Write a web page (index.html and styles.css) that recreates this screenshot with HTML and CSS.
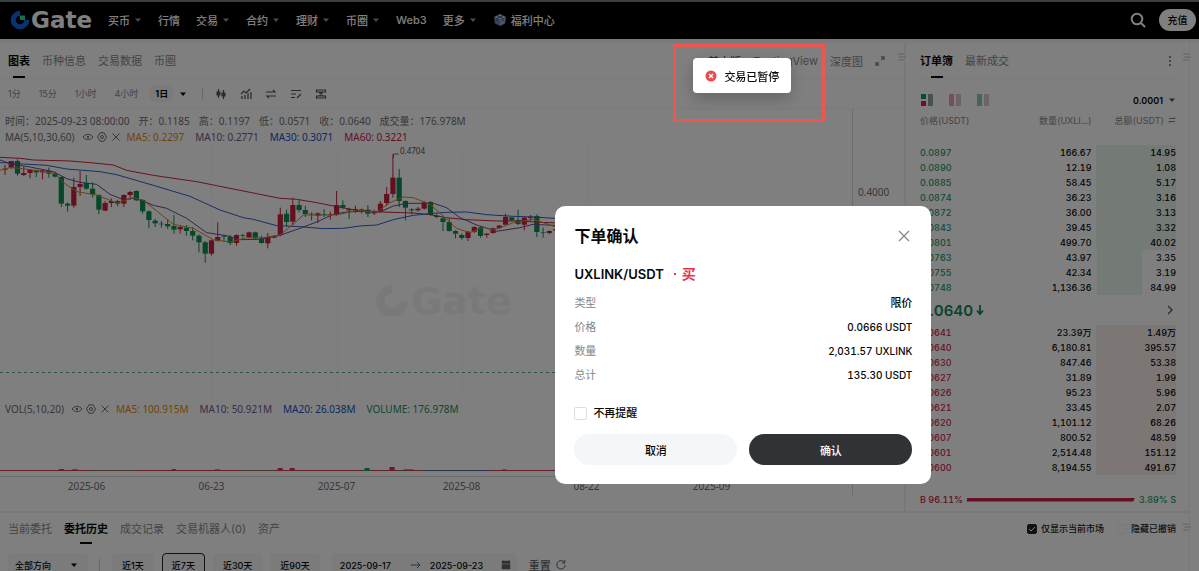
FILE: index.html
```html
<!DOCTYPE html>
<html lang="zh-CN">
<head>
    <meta charset="UTF-8">
    <meta name="viewport" content="width=device-width, initial-scale=1.0">
    <title>UXLINK/USDT - Gate</title>
    <link rel="stylesheet" href="styles.css">
</head>
<body>

    <svg class="sprite" aria-hidden="true">
        <symbol id="caret" viewBox="0 0 8 8"><path d="M1 2.500h6L4 6z" fill="currentColor"/></symbol>
        <symbol id="eye" viewBox="0 0 12 12"><path d="M1 6c2.500-3.500 7.500-3.500 10 0-2.500 3.500-7.500 3.500-10 0z" fill="none" stroke="currentColor"/><circle cx="6" cy="6" r="1.200" fill="currentColor"/></symbol>
        <symbol id="gear" viewBox="0 0 12 12"><path d="M4 1.800h4L10.500 6 8 10.200H4L1.500 6z" fill="none" stroke="currentColor" stroke-linejoin="round"/><circle cx="6" cy="6" r="1.500" fill="none" stroke="currentColor"/></symbol>
        <symbol id="cross" viewBox="0 0 12 12"><path d="M2.500 2.500l7 7M9.500 2.500l-7 7" stroke="currentColor" fill="none"/></symbol>
        <symbol id="grip" viewBox="0 0 8 8"><path d="M0 1h7M1 4h7M0 7h6" stroke="currentColor"/></symbol>
        <symbol id="gate" viewBox="0 0 20 20"><path d="M10 3.200a6.800 6.800 0 1 0 6.800 6.800" fill="none" stroke="currentColor" stroke-width="5"/></symbol>
    </svg>

    <header class="topbar">
        <a class="logo" href="#">
            <svg width="20" height="20" viewBox="0 0 20 20">
                <path d="M10 3.200a6.800 6.800 0 1 0 6.800 6.800" fill="none" stroke="#1565e0" stroke-width="5"/>
                <path d="M10 5.500h5V10h-5z" fill="#17e6a1"/>
            </svg>
            <span>Gate</span>
        </a>
        <nav class="menu">
            <a href="#">买币<svg class="caret"><use href="#caret"/></svg></a>
            <a href="#">行情</a>
            <a href="#">交易<svg class="caret"><use href="#caret"/></svg></a>
            <a href="#">合约<svg class="caret"><use href="#caret"/></svg></a>
            <a href="#">理财<svg class="caret"><use href="#caret"/></svg></a>
            <a href="#">币圈<svg class="caret"><use href="#caret"/></svg></a>
            <a href="#">Web3</a>
            <a href="#">更多<svg class="caret"><use href="#caret"/></svg></a>
            <a href="#">
                <svg class="gift" width="14" height="14" viewBox="0 0 14 14">
                    <path d="M1 4l6-3 6 3-6 3z" fill="#b8c8e8"/>
                    <path d="M1 4l6 3v6L2 10.500z" fill="#6f87b8"/>
                    <path d="M13 4L7 7v6l5-2.500z" fill="#94a8d0"/>
                    <path d="M4 2.500l6 3V8M10 2.500L4 5.500V8" fill="none" stroke="#40598c"/>
                </svg>福利中心</a>
        </nav>
        <button class="search" aria-label="搜索">
            <svg width="16" height="16" viewBox="0 0 16 16"><circle cx="7" cy="7" r="5.300" fill="none" stroke="currentColor" stroke-width="2"/><path d="M11 11l4 4" stroke="currentColor" stroke-width="2"/></svg>
        </button>
        <button class="deposit">充值</button>
    </header>

    <main class="workspace">
        <section class="panel chart-panel">
            <svg class="grip"><use href="#grip"/></svg>
            <div class="tabs">
                <a class="active" href="#">图表</a>
                <a href="#">币种信息</a>
                <a href="#">交易数据</a>
                <a href="#">币圈</a>
                <div class="views">
                    <a class="dark" href="#">基本版</a>
                    <a href="#">TradingView</a>
                    <a href="#">深度图</a>
                    <button aria-label="全屏"><svg width="10" height="10" viewBox="0 0 10 10"><path d="M6 1h3v3M9 1L6 4M4 9H1V6M1 9l3-3" fill="none" stroke="currentColor" stroke-width="1.300"/></svg></button>
                </div>
            </div>
            <div class="toolbar">
                <button>1分</button>
                <button>15分</button>
                <button>1小时</button>
                <button>4小时</button>
                <button class="selected">1日</button>
                <svg class="caret"><use href="#caret"/></svg>
                <span class="divider"></span>
                <div class="tools">
                    <svg viewBox="0 0 12 12"><path d="M3.500 1v9M8.500 2v9"/><path d="M1.500 3.500h4v4h-4zM6.500 4.500h4v4h-4z" fill="currentColor" stroke="none"/></svg>
                    <svg viewBox="0 0 12 12"><path d="M1 6l3-3 2 2 4-4M2 8v3M5 7v4M8 5v6M11 4v7"/></svg>
                    <svg viewBox="0 0 12 12"><path d="M1 4h9L8 2M11 8H2l2 2"/></svg>
                    <svg viewBox="0 0 12 12"><path d="M1 2.500h10M1 6h5M1 9.500h4M7 10l4-4"/></svg>
                    <svg viewBox="0 0 12 12"><path d="M1.500 4V2h9v2zM1.500 10V8h9v2zM4 4l4 4M8 4L4 8"/></svg>
                </div>
            </div>
            <div class="chart">
                <div class="plot">
                    <div class="legend ohlc">
                        <span>时间：2025-09-23 08:00:00</span>
                        <span>开：0.1185</span>
                        <span>高：0.1197</span>
                        <span>低：0.0571</span>
                        <span>收：0.0640</span>
                        <span>成交量：176.978M</span>
                    </div>
                    <div class="legend">
                        <span>MA(5,10,30,60)</span>
                        <span class="legend-icons"><svg><use href="#eye"/></svg><svg><use href="#gear"/></svg><svg><use href="#cross"/></svg></span>
                        <span class="orange">MA5: 0.2297</span>
                        <span class="purple">MA10: 0.2771</span>
                        <span class="blue">MA30: 0.3071</span>
                        <span class="crimson">MA60: 0.3221</span>
                    </div>
                    <svg class="price" viewBox="0 4 853 256" preserveAspectRatio="xMinYMin slice">
                        <path class="grid" d="M85.500 0v260M211.500 0v260M337.500 0v260M462.500 0v260M587.500 0v260M0 257.500h853"/>
                        <g class="watermark">
                            <use href="#gate" x="375" y="143" width="34" height="34"/>
                            <text x="411" y="173">Gate</text>
                        </g>
                        <g id="candles"></g>
                        <g id="averages"></g>
                        <path class="peak" d="M393.500 17v-4h5"/>
                        <text class="peak-label" x="400" y="13">0.4704</text>
                        <path class="last" d="M0 231.500h853"/>
                    </svg>
                    <div class="legend">
                        <span>VOL(5,10,20)</span>
                        <span class="legend-icons"><svg><use href="#eye"/></svg><svg><use href="#gear"/></svg><svg><use href="#cross"/></svg></span>
                        <span class="orange">MA5: 100.915M</span>
                        <span class="purple">MA10: 50.921M</span>
                        <span class="blue">MA20: 26.038M</span>
                        <span class="green">VOLUME: 176.978M</span>
                    </div>
                    <svg class="volume" viewBox="0 0 853 60" preserveAspectRatio="xMinYMax slice">
                        <path d="M0 54.500h853" stroke="#c84050"/>
                        <path d="M92 54.500h45M240 54.500h35M363 54.500h9M396 54.500h8" stroke="#8a6a58"/>
                        <path d="M424 54.500h66" stroke="#4a6898"/>
                        <path d="M59 53.500h5M172 53.500h4" stroke="#109a60"/>
                        <path d="M365 52h5v3h-5z" fill="#109a60"/>
                        <path d="M72 53.500h6M215 53.500h5M404 53.500h10M503 53.500h4" stroke="#e89030"/>
                        <path d="M278 52h5v3h-5zM290 52h5v3h-5zM390 51h5v4h-5z" fill="#d8304a"/>
                    </svg>
                    <div class="dates">
                        <span>2025-06</span><span>06-23</span><span>2025-07</span><span>2025-08</span><span>08-22</span><span>2025-09</span>
                    </div>
                </div>
                <div class="scale">0.4000</div>
            </div>
        </section>

        <section class="panel book">
            <svg class="grip"><use href="#grip"/></svg>
            <div class="tabs">
                <a class="active" href="#">订单簿</a>
                <a href="#">最新成交</a>
                <button class="more" aria-label="更多"><svg width="4" height="12" viewBox="0 0 4 12"><path d="M1 1h2v2H1zM1 5h2v2H1zM1 9h2v2H1z" fill="currentColor"/></svg></button>
            </div>
            <div class="book-modes">
                <svg viewBox="0 0 14 14"><path d="M1 1h5v5H1z" fill="#089a60"/><path d="M1 8h5v5H1z" fill="#e01a4a"/><path d="M8 1h5v12H8z" fill="#90a098"/></svg>
                <svg viewBox="0 0 14 14"><path d="M1 1h5v12H1z" fill="#eda0b0"/><path d="M8 1h5v12H8z" fill="#dcc4c6"/></svg>
                <svg viewBox="0 0 14 14"><path d="M1 1h5v12H1z" fill="#88cbb0"/><path d="M8 1h5v12H8z" fill="#dcc8ca"/></svg>
                <button class="precision">0.0001<svg class="caret"><use href="#caret"/></svg></button>
            </div>
            <table class="orders up">
                <thead>
                    <tr><th>价格(USDT)</th><th>数量(UXLI...)</th><th class="total">总额(USDT)<svg width="8" height="8" viewBox="0 0 8 8"><path d="M1 2.500h6L5.500 1M7 5.500H1L2.500 7" fill="none" stroke="currentColor"/></svg></th></tr>
                </thead>
                <tbody>
                    <tr><td>0.0897</td><td>166.67</td><td class="depth">14.95</td></tr>
                    <tr><td>0.0890</td><td>12.19</td><td class="depth">1.08</td></tr>
                    <tr><td>0.0885</td><td>58.45</td><td class="depth">5.17</td></tr>
                    <tr><td>0.0874</td><td>36.23</td><td class="depth">3.16</td></tr>
                    <tr><td>0.0872</td><td>36.00</td><td class="depth">3.13</td></tr>
                    <tr><td>0.0843</td><td>39.45</td><td class="depth">3.32</td></tr>
                    <tr><td>0.0801</td><td>499.70</td><td class="depth">40.02</td></tr>
                    <tr><td>0.0763</td><td>43.97</td><td class="depth part">3.35</td></tr>
                    <tr><td>0.0755</td><td>42.34</td><td class="depth part">3.19</td></tr>
                    <tr><td>0.0748</td><td>1,136.36</td><td class="depth part">84.99</td></tr>
                </tbody>
            </table>
            <div class="last-price">
                <span>0.0640</span>
                <svg width="8" height="12" viewBox="0 0 8 12"><path d="M4 1v9M1 6.500L4 10l3-3.500" fill="none" stroke="currentColor" stroke-width="1.800"/></svg>
                <svg class="go" width="8" height="12" viewBox="0 0 8 12"><path d="M2 2l4 4-4 4" fill="none" stroke="currentColor" stroke-width="1.300"/></svg>
            </div>
            <table class="orders down">
                <tbody>
                    <tr><td>0.0641</td><td>23.39万</td><td class="depth">1.49万</td></tr>
                    <tr><td>0.0640</td><td>6,180.81</td><td class="depth">395.57</td></tr>
                    <tr><td>0.0630</td><td>847.46</td><td class="depth">53.38</td></tr>
                    <tr><td>0.0627</td><td>31.89</td><td class="depth">1.99</td></tr>
                    <tr><td>0.0626</td><td>95.23</td><td class="depth">5.96</td></tr>
                    <tr><td>0.0621</td><td>33.45</td><td class="depth">2.07</td></tr>
                    <tr><td>0.0620</td><td>1,101.12</td><td class="depth">68.26</td></tr>
                    <tr><td>0.0607</td><td>800.52</td><td class="depth">48.59</td></tr>
                    <tr><td>0.0601</td><td>2,514.48</td><td class="depth">151.12</td></tr>
                    <tr><td>0.0600</td><td>8,194.55</td><td class="depth">491.67</td></tr>
                </tbody>
            </table>
            <div class="ratio">
                <span class="buy">B 96.11%</span>
                <span class="ratio-bar"></span>
                <span class="sell">3.89% S</span>
            </div>
        </section>
    </main>

    <section class="panel history">
        <svg class="grip"><use href="#grip"/></svg>
        <div class="tabs">
            <a href="#">当前委托</a>
            <a class="active" href="#">委托历史</a>
            <a href="#">成交记录</a>
            <a href="#">交易机器人(0)</a>
            <a href="#">资产</a>
            <div class="checks">
                <label><input type="checkbox" checked>仅显示当前市场</label>
                <label><input type="checkbox">隐藏已撤销</label>
            </div>
        </div>
        <div class="filters">
            <div class="side">
                <select aria-label="方向"><option>全部方向</option></select>
                <svg class="caret"><use href="#caret"/></svg>
            </div>
            <span class="divider"></span>
            <button>近1天</button>
            <button class="selected">近7天</button>
            <button>近30天</button>
            <button>近90天</button>
            <div class="range">
                <input type="text" value="2025-09-17" aria-label="开始日期">
                <svg width="10" height="10" viewBox="0 0 10 10"><path d="M0 5h9M6 2l3 3-3 3" fill="none" stroke="currentColor"/></svg>
                <input type="text" value="2025-09-23" aria-label="结束日期">
                <svg width="10" height="10" viewBox="0 0 10 10"><path d="M1 1h8v2.500H1zM1 4.500h8V9H1zM2.500 0v2M7.500 0v2" fill="currentColor" stroke="currentColor" stroke-width=".500"/></svg>
            </div>
            <button class="reset">重置<svg width="10" height="10" viewBox="0 0 10 10"><path d="M8.500 2.500A4.200 4.200 0 1 0 9.200 5M8.800 0v3H6" fill="none" stroke="currentColor"/></svg></button>
        </div>
    </section>

    <div class="overlay"></div>

    <div class="modal" role="dialog" aria-labelledby="modal-title">
        <div class="modal-head">
            <h2 id="modal-title">下单确认</h2>
            <button class="close" aria-label="关闭"><svg width="12" height="12" viewBox="0 0 12 12"><path d="M1 1l10 10M11 1L1 11" stroke="currentColor" stroke-width="1.300"/></svg></button>
        </div>
        <div class="pair">UXLINK/USDT <span class="side-buy"><i></i>买</span></div>
        <dl>
            <div><dt>类型</dt><dd>限价</dd></div>
            <div><dt>价格</dt><dd class="num">0.0666 USDT</dd></div>
            <div><dt>数量</dt><dd class="num">2,031.57 UXLINK</dd></div>
            <div><dt>总计</dt><dd class="num">135.30 USDT</dd></div>
        </dl>
        <label class="remind"><input type="checkbox">不再提醒</label>
        <div class="actions">
            <button class="cancel">取消</button>
            <button class="confirm">确认</button>
        </div>
    </div>

    <div class="highlight">
        <div class="toast">
            <svg width="12" height="12" viewBox="0 0 12 12"><circle cx="6" cy="6" r="5.500" fill="#e84c4c"/><path d="M4 4l4 4M8 4L4 8" stroke="#fff" stroke-width="1.300"/></svg>
            交易已暂停
        </div>
    </div>

    <script>
        // side, high, body top, body bottom, low
        const candles = [
            ['r',72,83,86,102],['r',60,60,80,84],['g',55,60,98,104],['r',76,96,102,105],['r',84,86,96,112],['g',86,88,94,108],
            ['r',86,88,94,115],['g',80,90,98,110],['g',92,98,107,110],['g',106,108,188,198],['g',184,188,194,212],['r',110,138,194,200],
            ['r',90,129,138,165],['g',102,126,143,146],['g',124,143,160,170],['g',160,162,206,220],['r',180,186,209,210],['r',172,180,186,198],
            ['g',176,180,188,196],['r',160,162,188,198],['r',150,153,162,176],['g',148,150,178,180],['g',174,177,211,218],['g',208,211,237,262],
            ['g',234,239,247,258],['g',240,248,250,260],['g',234,249,256,264],['g',222,255,266,278],['r',254,258,265,278],['g',252,260,270,284],
            ['g',258,270,284,298],['g',280,284,304,334],['g',300,304,338,365],['r',296,298,338,344],['r',244,288,299,302],['g',282,286,288,302],
            ['g',282,288,306,312],['r',280,282,306,314],['g',278,282,284,290],['r',272,274,288,292],['g',272,274,292,294],['g',284,292,306,308],
            ['r',276,289,307,322],['r',282,286,290,292],['r',200,220,282,286],['g',206,218,243,256],['r',170,192,242,252],['g',178,192,207,214],
            ['g',194,207,219,228],['g',214,218,220,238],['r',214,217,224,246],['g',204,219,221,228],['r',212,220,222,236],['r',150,192,221,224],
            ['g',178,192,200,204],['g',200,204,208,234],['r',194,204,208,216],['g',202,205,212,218],['g',192,206,218,228],['r',206,210,217,222],
            ['r',180,188,210,212],['r',138,159,186,194],['r',40,110,159,170],['g',84,110,180,198],['g',178,180,200,238],['g',202,205,208,220],
            ['r',198,203,208,212],['r',180,184,203,206],['g',180,183,222,224],['g',220,224,228,232],['g',228,232,243,270],['g',232,243,270,272],
            ['g',268,270,278,292],['g',278,282,291,296],['r',270,272,291,300],['r',256,258,272,276],['g',256,259,285,290],['r',276,278,282,290],
            ['r',260,262,276,278],['r',252,254,261,264],['r',218,228,251,252],['g',228,229,238,240],['g',206,237,249,252],['r',226,230,251,268],
            ['r',222,227,231,240],['g',220,225,273,288],['g',260,273,275,290],['r',268,270,276,280],['r',260,264,268,270]
        ];

        const averages = {
            '#c8263f': '0,49 60,52 100,57 210,60 270,65 340,72 380,88 460,103 590,122 650,134 770,158 840,172 890,175 950,185 1010,197 1070,208 1140,213 1240,216 1290,221 1340,230 1400,236 1490,240 1560,240 1620,244 1680,246',
            '#2c5fc8': '0,65 40,66 70,69 140,73 200,84 300,92 350,101 460,133 570,166 660,207 730,230 760,235 830,254 900,257 970,263 1030,262 1080,255 1130,252 1180,236 1240,223 1290,218 1340,214 1400,213 1460,221 1540,226 1600,228 1680,233',
            '#6a4a98': '0,57 30,68 90,78 160,92 200,113 240,124 290,130 330,160 370,176 400,172 430,180 460,193 500,202 560,232 620,275 680,284 720,296 780,295 840,283 900,262 950,243 1000,220 1040,213 1100,210 1140,213 1180,195 1220,187 1300,187 1340,200 1380,230 1430,252 1490,271 1560,260 1600,250 1680,254',
            '#d8862c': '0,88 30,80 60,82 120,90 165,97 190,125 230,152 290,162 350,186 400,170 430,178 470,210 520,250 580,262 640,296 690,303 740,290 790,290 840,282 885,245 910,222 1010,222 1070,208 1130,213 1170,185 1210,168 1240,170 1290,190 1330,225 1370,262 1410,275 1450,258 1480,268 1540,245 1600,235 1680,262'
        };

        const colors = { r: '#c8203f', g: '#0d8f55' };

        document.getElementById('candles').innerHTML = candles.map(([side, high, top, bottom, low], i) => {
            const x = 5 + i * 6.257;
            return `<path d="M${x} ${high / 3}V${low / 3}" stroke="${colors[side]}"/>` +
                `<rect x="${x - 2.6}" y="${top / 3}" width="5.2" height="${(bottom - top) / 3}" fill="${colors[side]}"/>`;
        }).join('');

        document.getElementById('averages').innerHTML = Object.entries(averages).map(([color, points]) =>
            `<polyline points="${points}" transform="scale(0.3333)" fill="none" stroke="${color}" stroke-width="3" stroke-linejoin="round"/>`
        ).join('');
    </script>
</body>
</html>
```
FILE: styles.css
```css
* {
    box-sizing: border-box;
}

body {
    margin: 0;
    height: 100vh;
    overflow: hidden;
    background-color: #fff;
    color: #070808;
    font-family: Inter, "Noto Sans CJK SC", sans-serif;
    font-size: 11px;
}

a {
    color: inherit;
    text-decoration: none;
}

button,
input,
select {
    margin: 0;
    padding: 0;
    border: none;
    background: none;
    color: inherit;
    font: inherit;
}

button {
    cursor: pointer;
}

svg {
    display: block;
    flex: none;
}

.sprite {
    position: absolute;
    width: 0;
    height: 0;
}

.caret {
    width: 8px;
    height: 8px;
}

.divider {
    width: 1px;
    height: 12px;
    background-color: #d0d0d0;
}

/* top bar */

.topbar {
    display: flex;
    align-items: center;
    height: 39px;
    padding: 0 3px 2px 10px;
    border-top: 2px solid #70807f;
    background-color: #000;
    color: #fff;
}

.logo {
    display: flex;
    align-items: center;
    gap: 1px;
    width: 98px;
    font-family: "DejaVu Sans", sans-serif;
    font-size: 23px;
    font-weight: bold;
    line-height: 24px;
}

.menu {
    display: flex;
    flex: 1;
    gap: 16px;
    font-weight: 500;
    white-space: nowrap;
}

.menu a {
    display: flex;
    align-items: center;
}

.menu .caret {
    margin-left: 4px;
    color: #999;
}

.gift {
    margin-right: 4px;
}

.search {
    margin-right: 13px;
}

.deposit {
    width: 37px;
    height: 22px;
    border-radius: 11px;
    background-color: #fff;
    color: #070808;
    font-size: 10px;
    font-weight: 500;
}

/* panels */

.workspace {
    display: grid;
    grid-template-columns: 1fr 284px;
    height: 472px;
    padding-right: 9px;
    border-top: 4px solid #f4f5f5;
}

.panel {
    position: relative;
}

.grip {
    position: absolute;
    top: 10px;
    right: -2px;
    width: 8px;
    height: 8px;
    color: #c8c8c8;
}

.tabs {
    display: flex;
    align-items: center;
    gap: 12px;
    height: 36px;
    padding: 0 19px 0 8px;
    border-bottom: 1px solid #f4f5f5;
    color: #84888c;
    white-space: nowrap;
}

.tabs > a {
    position: relative;
    line-height: 34px;
}

.tabs .active {
    color: #070808;
    font-weight: bold;
}

.tabs .active::after {
    content: "";
    position: absolute;
    left: 50%;
    bottom: 0;
    width: 12px;
    height: 2px;
    margin-left: -6px;
    background-color: #070808;
}

.views {
    display: flex;
    align-items: center;
    gap: 12px;
    margin-left: auto;
}

.dark {
    color: #404448;
}

.chart-panel {
    border-right: 2px solid #f0f0f0;
}

.toolbar {
    display: flex;
    align-items: center;
    gap: 18px;
    height: 30px;
    padding-left: 8px;
    border-bottom: 1px solid #f4f5f5;
    color: #84888c;
    font-size: 9px;
}

.toolbar .selected {
    margin: 0 -7px;
    padding: 2px 6px;
    border-radius: 8px;
    background-color: #f4f5f5;
    color: #070808;
    font-weight: bold;
}

.toolbar > .caret {
    margin: 0 -3px 0 -6px;
    color: #070808;
}

.tools {
    display: flex;
    gap: 13px;
    margin-left: -6px;
    color: #505458;
}

.tools svg {
    width: 12px;
    height: 12px;
    fill: none;
    stroke: currentColor;
    stroke-width: 1.2;
}

/* chart */

.chart {
    display: flex;
    font-family: "Noto Sans", "Noto Sans CJK SC", sans-serif;
    font-size: 10px;
    color: #6c7074;
}

.plot {
    flex: 1;
    min-width: 0;
    overflow: hidden;
    border-right: 1px solid #d8d8d8;
}

.legend {
    display: flex;
    align-items: center;
    gap: 11px;
    height: 16px;
    padding-left: 5px;
    line-height: 16px;
    white-space: nowrap;
}

.ohlc {
    height: 20px;
    gap: 9px;
    padding-top: 3px;
}

.legend-icons {
    display: flex;
    gap: 2px;
    margin: 0 -6px 0 -4px;
}

.legend-icons svg {
    width: 12px;
    height: 12px;
}

.orange {
    color: #e08a10;
}

.purple {
    color: #705890;
}

.blue {
    color: #1850c0;
}

.crimson {
    color: #c81848;
}

.green {
    color: #189060;
}

.price {
    width: 100%;
    height: 256px;
}

.grid {
    stroke: #f8f8f8;
}

.watermark {
    color: #f3f3f3;
    fill: #f3f3f3;
    font-family: "DejaVu Sans", sans-serif;
    font-size: 38px;
    font-weight: bold;
}

.peak {
    fill: none;
    stroke: #606468;
}

.peak-label {
    fill: #505458;
    font-size: 8px;
}

.last {
    stroke: #60a890;
    stroke-dasharray: 3 3;
}

.volume {
    width: 100%;
    height: 60px;
    border-bottom: 1px solid #d8d8d8;
}

.dates {
    display: flex;
    padding-left: 24px;
    line-height: 18px;
}

.dates span {
    flex: none;
    width: 125px;
    text-align: center;
}

.scale {
    width: 51px;
    padding: 76px 0 0 5px;
}

/* order book */

.book {
    padding: 0 13px 0 14px;
    border-right: 1px solid #f0f0f0;
}

.book .tabs {
    padding: 0;
}

.more {
    margin: 0 4px 0 auto;
}

.book-modes {
    display: flex;
    align-items: center;
    gap: 14px;
    height: 26px;
    margin-top: 8px;
}

.book-modes > svg {
    width: 14px;
    height: 14px;
}

.precision {
    display: flex;
    align-items: center;
    gap: 5px;
    margin-left: auto;
    font-size: 9px;
    font-weight: 600;
}

.precision .caret {
    color: #505458;
}

.orders {
    width: 100%;
    border-collapse: collapse;
    table-layout: fixed;
    font-size: 9px;
    font-variant-numeric: tabular-nums;
    line-height: 15px;
}

.orders th {
    height: 32px;
    padding: 0;
    vertical-align: top;
    color: #84888c;
    font-weight: normal;
    text-align: right;
    white-space: nowrap;
}

.orders th:first-child,
.orders td:first-child {
    text-align: left;
}

.orders td {
    height: 15px;
    padding: 0;
    font-weight: 500;
    text-align: right;
}

.orders th:last-child,
.orders td:last-child {
    width: 33%;
}

.orders .total svg {
    display: inline-block;
    margin-left: 4px;
}

.up td:first-child {
    color: #189868;
}

.down td:first-child {
    color: #d02850;
}

.depth {
    background: linear-gradient(#e8f5ea, #e8f5ea) no-repeat right / 80px 100%;
}

.part {
    background-size: 45px 100%;
    background-position: 5px 0;
}

.down .depth {
    background-image: linear-gradient(#f8ecea, #f8ecea);
}

.last-price {
    display: flex;
    align-items: center;
    gap: 3px;
    height: 30px;
    color: #108858;
    font-size: 15px;
    font-weight: 600;
}

.go {
    margin: 0 2px 0 auto;
    color: #505458;
}

.ratio {
    display: flex;
    align-items: center;
    gap: 4px;
    margin-top: 17px;
    font-size: 9px;
    font-variant-numeric: tabular-nums;
    line-height: 15px;
    font-weight: 500;
}

.ratio-bar {
    flex: 1;
    height: 4px;
    background-color: #c82048;
    clip-path: polygon(0 0, 100% 0, 99% 100%, 0 100%);
}

.buy {
    color: #c82048;
}

.sell {
    color: #189868;
}

/* order history */

.history {
    margin-right: 9px;
    border-top: 2px solid #f0f0f0;
    border-right: 1px solid #f0f0f0;
}

.history .tabs {
    height: 31px;
    padding-right: 13px;
    border-bottom: none;
}

.history .tabs > a {
    line-height: 30px;
}

.checks {
    display: flex;
    gap: 13px;
    margin-left: auto;
    color: #202428;
    font-size: 9px;
    font-weight: 500;
}

.checks label {
    display: flex;
    align-items: center;
    gap: 4px;
}

.checks input {
    appearance: none;
    width: 10px;
    height: 10px;
    border: 1px solid #f0f0f0;
    border-radius: 2px;
}

.checks input:checked {
    border-color: #202428;
    background: #202428 url('data:image/svg+xml,<svg xmlns="http://www.w3.org/2000/svg" viewBox="0 0 8 8"><path d="M1 4l2 2 4-4" fill="none" stroke="white"/></svg>');
}

.filters {
    display: flex;
    align-items: center;
    gap: 8px;
    margin-top: 9px;
    padding-left: 8px;
    font-size: 9px;
    font-weight: 500;
}

.side {
    position: relative;
    width: 80px;
    height: 24px;
    border-radius: 4px;
    background-color: #f6f7f7;
}

.side select {
    appearance: none;
    width: 100%;
    height: 100%;
    padding-left: 7px;
}

.side .caret {
    position: absolute;
    top: 8px;
    right: 10px;
}

.filters .divider {
    margin: 0 4px 0 3px;
}

.filters button {
    height: 24px;
    padding: 0 9px;
    border: 1px solid #f6f7f7;
    border-radius: 4px;
    background-color: #f6f7f7;
}

.filters .selected {
    border-color: #202428;
}

.range {
    display: flex;
    align-items: center;
    height: 24px;
    margin-left: 4px;
    padding: 0 6px 0 8px;
    gap: 9px;
    border-radius: 4px;
    background-color: #f6f7f7;
    color: #606468;
}

.range input {
    width: 62px;
    color: #070808;
}

.filters .reset {
    display: flex;
    align-items: center;
    gap: 5px;
    padding: 0 4px;
    border: none;
    background: none;
    color: #606468;
    font-size: 11px;
}

/* dialog and toast */

.overlay {
    position: fixed;
    inset: 0;
    background-color: rgba(0, 0, 0, 0.5);
}

.modal {
    position: fixed;
    top: 206px;
    left: 62%;
    width: 376px;
    padding: 18px 19px 19px;
    border-radius: 10px;
    background-color: #fff;
    transform: translateX(-50%);
}

.modal-head {
    display: flex;
    align-items: center;
    justify-content: space-between;
}

.modal h2 {
    margin: 0;
    font-size: 16px;
    line-height: 24px;
}

.close {
    width: 14px;
    height: 24px;
    color: #84888c;
}

.pair {
    display: flex;
    align-items: center;
    gap: 10px;
    margin-top: 16px;
    font-size: 13px;
    font-weight: 600;
    line-height: 20px;
}

.side-buy {
    display: flex;
    align-items: center;
    gap: 6px;
    color: #e8304f;
    font-size: 14px;
}

.side-buy i {
    width: 2px;
    height: 2px;
    background-color: #e8304f;
}

.modal dl {
    margin: 7px 0 0;
    line-height: 24px;
}

.modal dl div {
    display: flex;
    justify-content: space-between;
}

.modal dt {
    color: #84888c;
}

.modal dd {
    margin: 0;
    font-weight: 500;
}

.modal .num {
    font-size: 10px;
    font-variant-numeric: tabular-nums;
}

.remind {
    display: flex;
    align-items: center;
    gap: 6px;
    margin-top: 18px;
    font-weight: 500;
    line-height: 16px;
}

.remind input {
    appearance: none;
    width: 13px;
    height: 13px;
    border: 1px solid #dcdee0;
    border-radius: 2px;
}

.actions {
    display: flex;
    gap: 12px;
    margin-top: 13px;
}

.actions button {
    flex: 1;
    height: 31px;
    border-radius: 16px;
    font-weight: 500;
}

.cancel {
    background-color: #f4f6f7;
}

.actions .confirm {
    background-color: #303236;
    color: #fff;
}

.highlight {
    position: fixed;
    top: 44px;
    left: 62%;
    display: flex;
    width: 152px;
    height: 78px;
    padding: 11px 0 0 17px;
    align-items: flex-start;
    border: 3px solid #ec5850;
    margin-left: -70px;
}

.toast {
    display: flex;
    align-items: center;
    gap: 7px;
    height: 35px;
    padding: 0 12px;
    border-radius: 4px;
    background-color: #fff;
    box-shadow: 0 6px 16px rgba(0, 0, 0, 0.2);
    font-weight: 500;
    white-space: nowrap;
}
```
